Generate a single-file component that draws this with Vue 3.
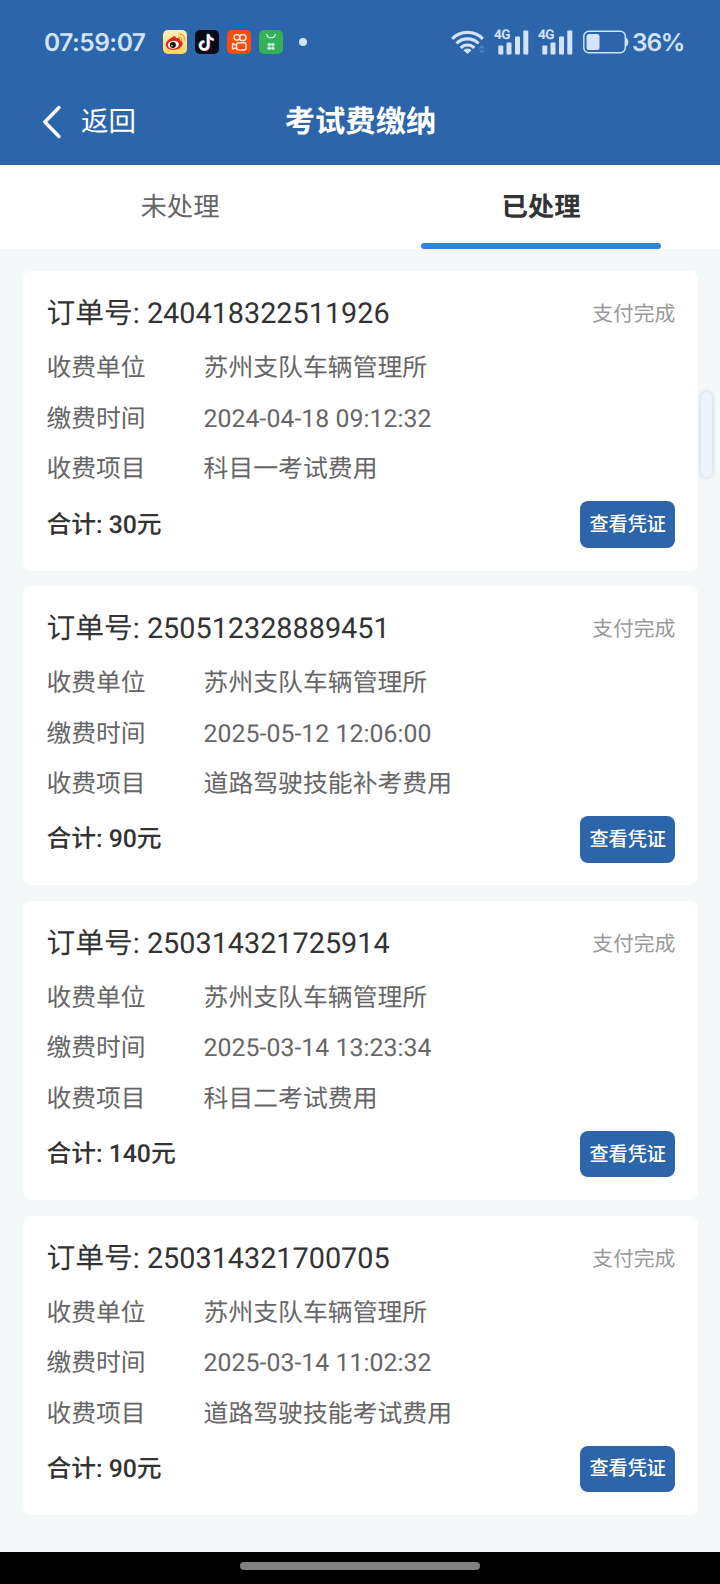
<script setup>
const orders = [
  {
    no: '240418322511926',
    unit: '苏州支队车辆管理所',
    time: '2024-04-18 09:12:32',
    item: '科目一考试费用',
    total: 30
  },
  {
    no: '250512328889451',
    unit: '苏州支队车辆管理所',
    time: '2025-05-12 12:06:00',
    item: '道路驾驶技能补考费用',
    total: 90
  },
  {
    no: '250314321725914',
    unit: '苏州支队车辆管理所',
    time: '2025-03-14 13:23:34',
    item: '科目二考试费用',
    total: 140
  },
  {
    no: '250314321700705',
    unit: '苏州支队车辆管理所',
    time: '2025-03-14 11:02:32',
    item: '道路驾驶技能考试费用',
    total: 90
  }
]
</script>

<template>
  <div class="page">
    <header class="header">
      <div class="status-bar">
        <span class="clock">07:59:07</span>
        <div class="apps">
          <svg class="app" viewBox="0 0 24 24">
            <defs>
              <linearGradient id="weibo" x1="0" y1="0" x2="0" y2="1">
                <stop offset="0" stop-color="#fff0bd" />
                <stop offset="1" stop-color="#fbd45f" />
              </linearGradient>
            </defs>
            <rect width="24" height="24" rx="5" fill="url(#weibo)" />
            <path d="M9 7.400c1.600-1.700 3.900-1.500 4.100.9 2.500-.9 4.600-.3 3.900 2.200 2.300.6 3 2 2.500 3.700-1 3.600-4.800 5.600-9.200 5.600-4.300 0-7.500-1.900-7.500-5 0-2.600 2.600-5.700 6.200-7.400z" fill="#e0251c" />
            <ellipse cx="10.400" cy="14.800" rx="5.600" ry="3.900" fill="#fff" transform="rotate(-8 10.400 14.800)" />
            <circle cx="9.900" cy="15" r="3" fill="#15100d" />
            <circle cx="8.900" cy="15.800" r=".8" fill="#fff" />
            <path d="M15.600 7.200c2-.3 3.400 1.100 3.100 3.200M15.900 4.100c3.700-.4 6.100 2.500 5.500 6" fill="none" stroke="#f3a526" stroke-width="1.400" stroke-linecap="round" />
          </svg>
          <svg class="app" viewBox="0 0 24 24">
            <rect width="24" height="24" rx="5" fill="#080a16" />
            <g fill="none" stroke-width="2.500">
              <path d="M12.700 3.800v11.400a4 4 0 1 1-4-4M12.700 4.200c.5 3 2.400 4.500 5.300 4.800" stroke="#2fe6e4" />
              <path d="M14 4.700v11.400a4 4 0 1 1-4-4M14 5.100c.5 3 2.400 4.500 5.300 4.800" stroke="#f2385e" />
              <path d="M13.300 4.200v11.400a4 4 0 1 1-4-4M13.300 4.600c.5 3 2.400 4.500 5.300 4.800" stroke="#fff" />
            </g>
          </svg>
          <svg class="app" viewBox="0 0 24 24">
            <rect width="24" height="24" rx="5" fill="#fb4b11" />
            <g fill="none" stroke="#ffe9dc" stroke-width="1.500" stroke-linejoin="round">
              <circle cx="9.900" cy="7.300" r="2.900" />
              <circle cx="15.800" cy="7.600" r="3.200" />
              <rect x="9.600" y="12.700" width="9.400" height="7.300" rx="2" />
              <path d="M9.600 15.200l-4-1.500v5.400l4-1.500" />
            </g>
          </svg>
          <svg class="app" viewBox="0 0 24 24">
            <rect width="24" height="24" rx="5" fill="#34b158" />
            <path d="M7.700 4.300a4.400 4.400 0 0 0 8.600 0" fill="none" stroke="#d6f3dc" stroke-width="1.200" stroke-linecap="round" />
            <g fill="#cdf0d6">
              <circle cx="10.300" cy="14.500" r="1.800" />
              <circle cx="13.900" cy="14.500" r="1.800" />
              <circle cx="10.300" cy="18.200" r="1.800" />
              <circle cx="13.900" cy="18.200" r="1.800" />
            </g>
          </svg>
        </div>
        <i class="more-dot"></i>

        <div class="signals">
          <svg class="wifi" viewBox="0 0 35 24">
            <g fill="none" stroke="#d3e3fb" stroke-width="3.100">
              <path d="M1.200 8.800a21.500 21.500 0 0 1 30.600 0" />
              <path d="M5.500 13.500a15.400 15.400 0 0 1 22 0" />
              <path d="M9.700 17.900a9.500 9.500 0 0 1 13.600 0" />
            </g>
            <path d="M12.400 20.200a5.800 5.800 0 0 1 8.200 0L16.500 24z" fill="#d3e3fb" />
            <path d="M27.700 18.400l3-3.700 3 3.700zM27.700 20.200l3 3.500 3-3.500z" fill="#4b80c3" />
          </svg>
          <div v-for="sim in 2" :key="sim" class="cell">
            <span class="cell-label">4G</span>
            <svg class="cell-bars" viewBox="0 0 35 25">
              <g fill="#d3e3fb">
                <rect x="4.300" y="15.500" width="5" height="9" rx="1" />
                <rect x="12.500" y="12.500" width="5" height="12" rx="1" />
                <rect x="21" y="6.500" width="5" height="18" rx="1" />
                <rect x="29.300" y=".5" width="5" height="24" rx="1" />
              </g>
            </svg>
          </div>
          <svg class="battery" viewBox="0 0 46 24">
            <rect x=".8" y="1.300" width="41.500" height="21.400" rx="5" fill="none" stroke="#d3e3fb" stroke-width="1.400" />
            <rect x="3.500" y="4" width="13" height="16" rx="2.500" fill="#d3e3fb" />
            <path d="M43 7.500q2.300 1.200 2.300 4.500T43 16.500z" fill="#d3e3fb" />
          </svg>
          <span class="percent">36%</span>
        </div>
      </div>

      <div class="nav-bar">
        <div class="back">
          <svg class="back-icon" viewBox="0 0 20 34">
            <path d="M17 2.500L2.800 17 17 31.500" fill="none" stroke="#fff" stroke-width="3.400" stroke-linecap="round" stroke-linejoin="round" />
          </svg>
          <span>返回</span>
        </div>
        <h1 class="title">考试费缴纳</h1>
      </div>
    </header>

    <nav class="tabs">
      <div class="tab">未处理</div>
      <div class="tab active">已处理</div>
    </nav>

    <main class="list">
      <article v-for="order in orders" :key="order.no" class="card">
        <div class="card-head">
          <h2 class="order-no">订单号: {{ order.no }}</h2>
          <span class="state">支付完成</span>
        </div>
        <dl class="rows">
          <div class="row">
            <dt>收费单位</dt>
            <dd>{{ order.unit }}</dd>
          </div>
          <div class="row">
            <dt>缴费时间</dt>
            <dd>{{ order.time }}</dd>
          </div>
          <div class="row">
            <dt>收费项目</dt>
            <dd>{{ order.item }}</dd>
          </div>
        </dl>
        <div class="card-foot">
          <span class="total">合计: {{ order.total }}元</span>
          <button class="voucher" type="button">查看凭证</button>
        </div>
      </article>
    </main>

    <footer class="gesture-bar">
      <i class="handle"></i>
    </footer>

    <i class="side-handle"></i>
  </div>
</template>

<style>
body {
  margin: 0;
}
</style>

<style scoped>
.page {
  position: relative;
  display: flex;
  flex-direction: column;
  width: 720px;
  height: 1584px;
  overflow: hidden;
  background: #f4f8f9;
  color: #333;
  font-family: Roboto, 'Noto Sans CJK SC', sans-serif;
  text-rendering: geometricPrecision;
}

.header {
  height: 164.500px;
  flex-shrink: 0;
  background: #2c65a9;
  color: #fff;
}

.status-bar {
  display: flex;
  align-items: center;
  height: 84px;
  padding: 0 36px 0 44px;
  color: #d3e3fb;
  font-family: Inter, sans-serif;
}

.clock {
  width: 119px;
  font-size: 24.500px;
  font-weight: 600;
  letter-spacing: -0.500px;
  white-space: nowrap;
}

.apps {
  display: flex;
  gap: 8px;
}

.app {
  width: 24px;
  height: 24px;
}

.more-dot {
  width: 8px;
  height: 8px;
  margin-left: 16px;
  border-radius: 50%;
  background: #d3e3fb;
}

.signals {
  display: flex;
  align-items: center;
  margin-left: auto;
}

.wifi {
  width: 35px;
  height: 24px;
  margin-right: 8px;
}

.cell {
  position: relative;
  width: 35px;
  height: 25px;
  margin-right: 9px;
}

.cell-bars {
  display: block;
  width: 35px;
  height: 25px;
}

.cell-label {
  position: absolute;
  top: -3px;
  left: 0;
  font: 700 13.500px/16px Roboto, sans-serif;
  letter-spacing: -0.500px;
}

.battery {
  width: 46px;
  height: 24px;
  margin: 0 3px 0 1px;
}

.percent {
  width: 52px;
  font-size: 24.500px;
  font-weight: 600;
  letter-spacing: -1.200px;
  white-space: nowrap;
}

.nav-bar {
  display: grid;
  grid-template-columns: 1fr auto 1fr;
  align-items: center;
  height: 75px;
  padding: 0 42px;
}

.back {
  display: flex;
  align-items: center;
  gap: 19px;
  font-size: 27.500px;
  line-height: 40px;
}

.back-icon {
  width: 20px;
  height: 34px;
}

.title {
  margin: 0;
  padding: 3px 0 0 1px;
  font-size: 30.300px;
  font-weight: 700;
  line-height: 40px;
}

.tabs {
  display: flex;
  height: 84.500px;
  flex-shrink: 0;
  background: #fff;
}

.tab {
  position: relative;
  flex: 1;
  color: #666;
  font-size: 26.400px;
  line-height: 86px;
  text-align: center;
}

.tab.active {
  color: #333;
  font-weight: 700;
  text-indent: 2px;
}

.tab.active::after {
  content: '';
  position: absolute;
  left: 61px;
  bottom: 0;
  width: 240px;
  height: 6px;
  border-radius: 3px;
  background: #2d84e8;
}

.list {
  display: flex;
  flex: 1;
  flex-direction: column;
  gap: 15.400px;
  padding: 22.200px 21.600px 0 23.400px;
}

.card {
  box-sizing: border-box;
  height: 299.400px;
  padding: 15px 23px 0;
  border-radius: 8px;
  background: #fff;
}

.card-head {
  display: flex;
  align-items: center;
  justify-content: space-between;
  height: 56.200px;
}

.order-no {
  margin: 0;
  font-size: 28.800px;
  font-weight: 400;
  line-height: 56px;
}

.state {
  padding-top: 2px;
  color: #999;
  font-size: 20.800px;
  line-height: 56px;
}

.rows {
  margin: 0;
  color: #666;
  font-size: 24.800px;
}

.row {
  display: flex;
  height: 50.400px;
  line-height: 53px;
}

.row dt {
  width: 157.200px;
}

.row dd {
  margin: 0;
  letter-spacing: 0.050px;
}

.card-foot {
  display: flex;
  align-items: center;
  justify-content: space-between;
  height: 62.200px;
}

.total {
  padding-top: 2px;
  font-size: 24.800px;
  font-weight: 500;
  line-height: 60px;
}

.voucher {
  width: 95.500px;
  height: 46.500px;
  padding: 0 0 3px;
  border: 0;
  border-radius: 8px;
  background: #2c65a9;
  color: #fff;
  font-family: inherit;
  font-size: 19.100px;
  font-weight: 500;
  white-space: nowrap;
}

.gesture-bar {
  display: flex;
  align-items: center;
  justify-content: center;
  height: 32px;
  flex-shrink: 0;
  background: #000;
}

.handle {
  width: 240px;
  height: 8px;
  margin-bottom: 5px;
  border-radius: 4px;
  background: #828282;
}

/* edge panel grip floating over the list */
.side-handle {
  position: absolute;
  top: 392px;
  right: 8px;
  width: 11px;
  height: 85px;
  border-radius: 6px;
  background: #eef3fc;
  box-shadow: 0 0 4px 1px rgba(90, 110, 130, 0.22);
}
</style>
